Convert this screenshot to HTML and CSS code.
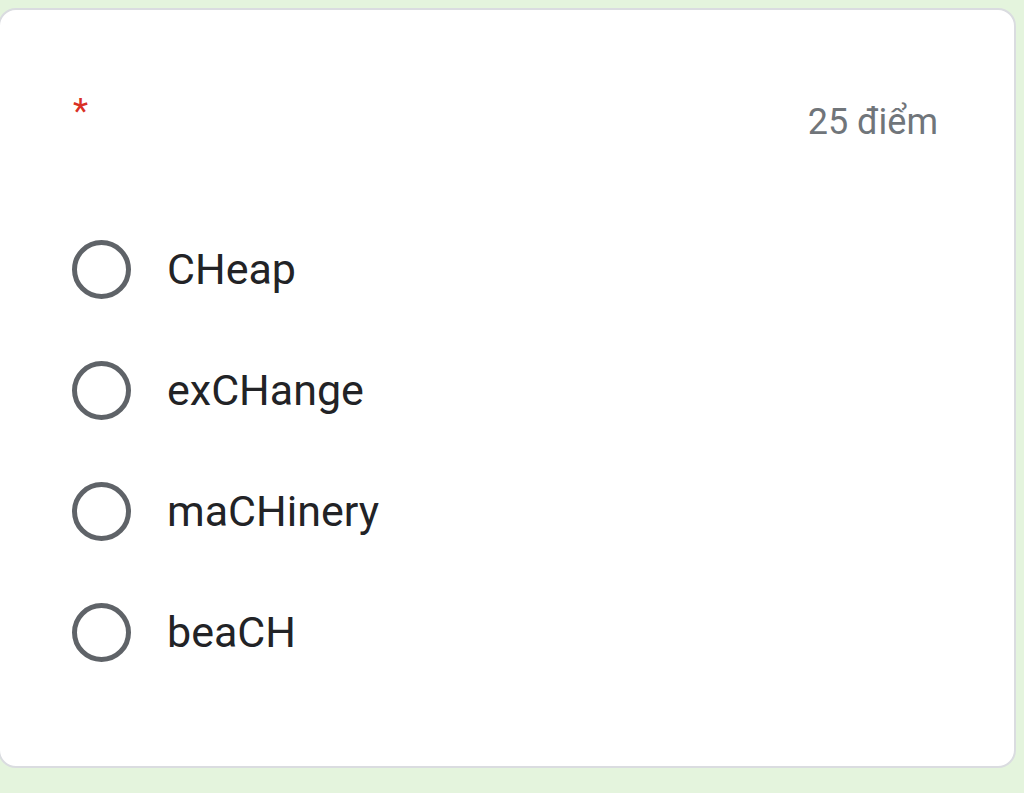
FILE: index.html
```html
<!DOCTYPE html>
<html lang="vi">
<head>
<meta charset="utf-8">
<link rel="stylesheet" href="styles.css">
</head>
<body>
<div class="card">
  <div class="header">
    <span class="req">*</span>
    <span class="points">25 điểm</span>
  </div>
  <div class="options">
    <div class="option"><span class="radio"></span><span class="label">CHeap</span></div>
    <div class="option"><span class="radio"></span><span class="label">exCHange</span></div>
    <div class="option"><span class="radio"></span><span class="label">maCHinery</span></div>
    <div class="option"><span class="radio"></span><span class="label">beaCH</span></div>
  </div>
</div>
</body>
</html>
```

FILE: styles.css
```css
html, body {
  margin: 0;
  padding: 0;
  background: #e4f4dd;
  font-family: Roboto, "Noto Sans", sans-serif;
}
.card {
  box-sizing: border-box;
  margin: 8px 0 0 -2px;
  width: 1018px;
  height: 760px;
  background: #fff;
  border: 2px solid #dadce0;
  border-radius: 18px;
  padding: 0 0 0 72px;
}
.header {
  display: flex;
  justify-content: space-between;
  align-items: flex-start;
  padding: 80px 76px 0 0;
  height: 120px;
  box-sizing: border-box;
}
.req {
  color: #d93025;
  font-size: 35px;
  line-height: 1;
  margin-top: 4px;
  margin-left: 1px;
}
.points {
  color: #70757a;
  font-size: 36px;
  line-height: 1;
  margin-top: 14px;
}
.options {
  display: flex;
  flex-direction: column;
  padding-top: 79px;
}
.option {
  display: flex;
  align-items: center;
  height: 121px;
}
.radio {
  box-sizing: border-box;
  width: 59px;
  height: 59px;
  border: 5px solid #5f6368;
  border-radius: 50%;
  flex: none;
}
.label {
  margin-left: 36px;
  font-size: 43px;
  color: #222326;
  line-height: 1;
}
```
